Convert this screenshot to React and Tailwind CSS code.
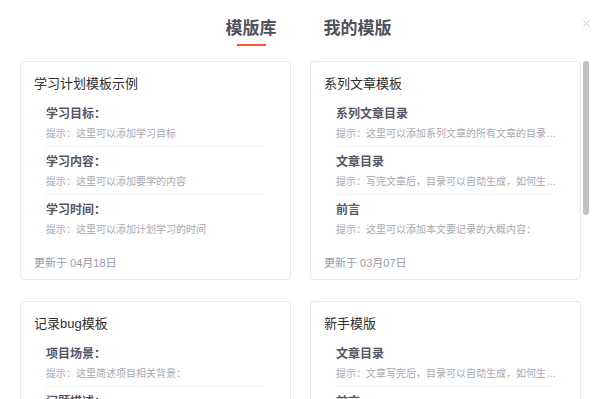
import React from "react";

const cards = [
  {
    title: "学习计划模板示例",
    date: "更新于 04月18日",
    sections: [
      { h: "学习目标：", t: "提示：这里可以添加学习目标" },
      { h: "学习内容：", t: "提示：这里可以添加要学的内容" },
      { h: "学习时间：", t: "提示：这里可以添加计划学习的时间" },
    ],
  },
  {
    title: "系列文章模板",
    date: "更新于 03月07日",
    sections: [
      { h: "系列文章目录", t: "提示：这里可以添加系列文章的所有文章的目录，目录需要自己手动添加" },
      { h: "文章目录", t: "提示：写完文章后，目录可以自动生成，如何生成可参考右边的帮助文档" },
      { h: "前言", t: "提示：这里可以添加本文要记录的大概内容：" },
    ],
  },
  {
    title: "记录bug模板",
    date: "更新于 03月07日",
    sections: [
      { h: "项目场景：", t: "提示：这里简述项目相关背景：" },
      { h: "问题描述：", t: "提示：这里描述项目中遇到的问题：" },
      { h: "原因分析：", t: "提示：这里填写问题的分析：" },
    ],
  },
  {
    title: "新手模版",
    date: "更新于 03月07日",
    sections: [
      { h: "文章目录", t: "提示：文章写完后，目录可以自动生成，如何生成可参考右边的帮助文档" },
      { h: "前言", t: "提示：这里可以添加本文要记录的大概内容：" },
      { h: "一、pandas是什么？", t: "示例：pandas 是基于NumPy 的一种工具" },
    ],
  },
];

function Card({ c }) {
  return (
    <div className="h-[219px] border border-[#e8e8ed] rounded-[4px] px-[13px] pt-[12px] flex flex-col overflow-hidden">
      <div className="text-[13px] leading-[20px] text-[#2e2e33]">{c.title}</div>
      <div className="mt-[10px] pl-[12px] flex flex-col">
        {c.sections.map((s, i) => {
          const last = i === c.sections.length - 1;
          return (
            <div
              key={i}
              className={
                last
                  ? "w-[215px] mt-[5px]"
                  : i === 0
                  ? "w-[215px] pb-[2px] border-b border-[#f0f0f3]"
                  : "w-[215px] pb-[2px] mt-[5px] border-b border-[#f0f0f3]"
              }
            >
              <div className="text-[12px] leading-[20px] font-bold text-[#555666]">{s.h}</div>
              <div className="w-[222px] text-[10px] leading-[20px] text-[#a8a8b3] whitespace-nowrap overflow-hidden text-ellipsis">
                {s.t}
              </div>
            </div>
          );
        })}
      </div>
      <div className="mt-auto mb-[6px] text-[11px] leading-[20px] text-[#999aaa]">{c.date}</div>
    </div>
  );
}

export default function App() {
  return (
    <div className="relative w-[606px] h-[399px] overflow-hidden bg-white font-['Liberation_Sans','Noto_Sans_CJK_SC',sans-serif]">
      <button className="absolute right-[16px] top-[20px] w-[7px] h-[7px]">
        <svg width="7" height="7" viewBox="0 0 7 7" className="block">
          <path d="M0.5 0.5L6.5 6.5M6.5 0.5L0.5 6.5" stroke="#c4c4c8" strokeWidth="1" />
        </svg>
      </button>
      <div className="flex justify-center pl-[11px] pt-[17px] gap-[47px]">
        <div className="flex flex-col items-center">
          <span className="text-[17px] leading-[24px] font-bold text-[#50505e]">模版库</span>
          <span className="mt-[3px] h-[2px] w-[29px] bg-[#fc5531]" />
        </div>
        <div className="flex flex-col items-center">
          <span className="text-[17px] leading-[24px] font-bold text-[#50505e]">我的模版</span>
        </div>
      </div>
      <div className="flex mt-[15px] pl-[20px]">
        <div className="grid grid-cols-[271px_271px] gap-x-[19px] gap-y-[21px] w-[561px]">
          {cards.map((c, i) => (
            <Card key={i} c={c} />
          ))}
        </div>
        <div className="ml-[2px] w-[6px]">
          <div className="h-[154px] w-[6px] rounded-full bg-[#c1c1c1]" />
        </div>
      </div>
    </div>
  );
}
